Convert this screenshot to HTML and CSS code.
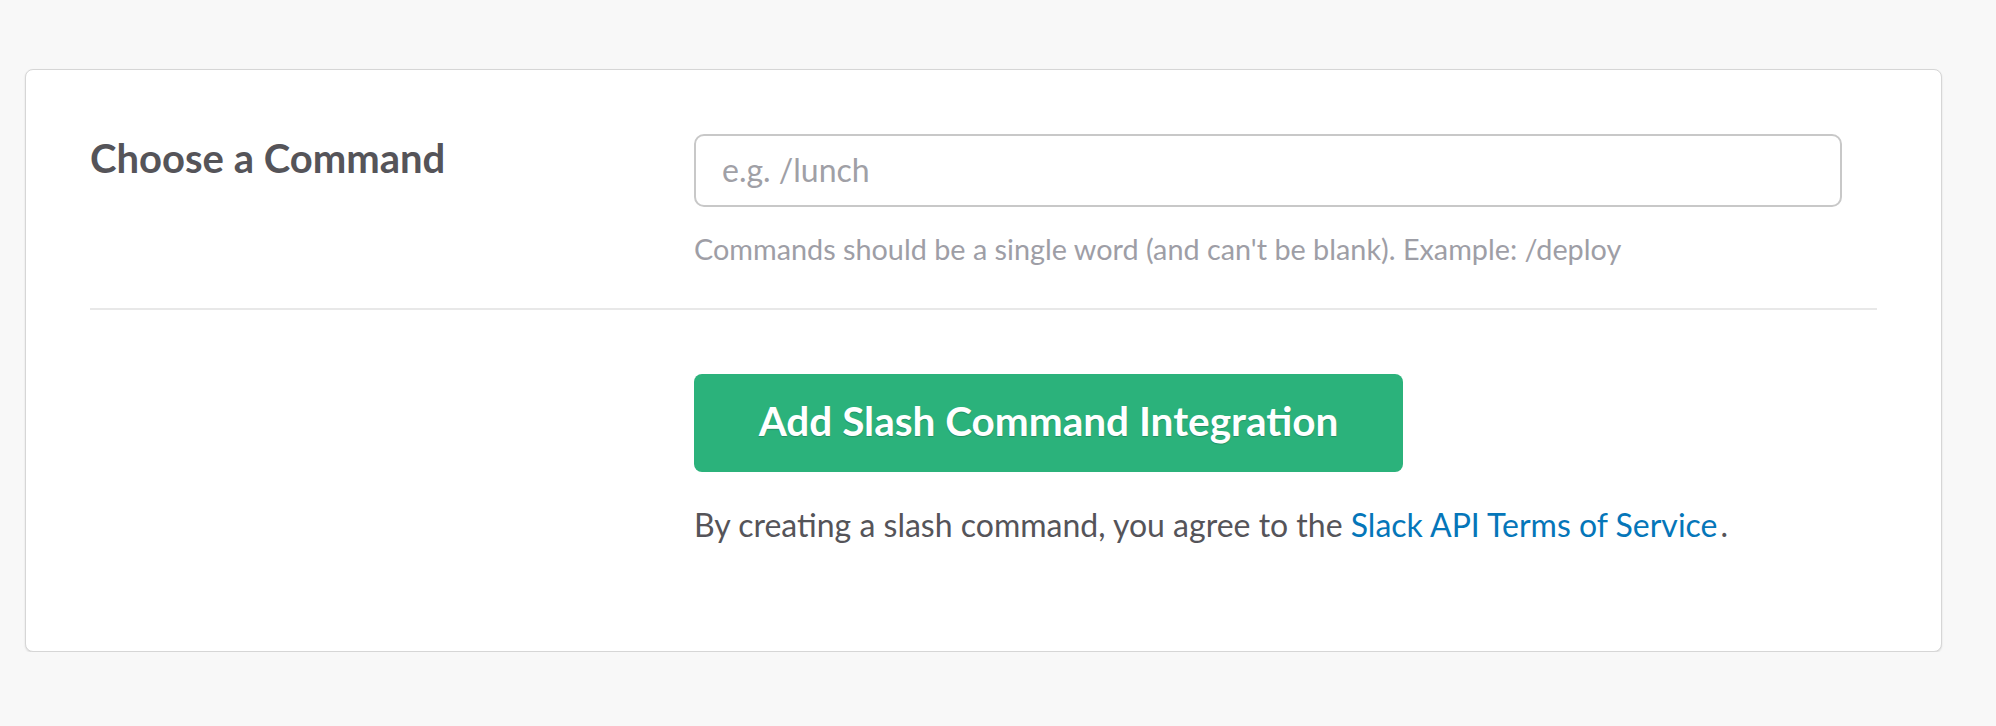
FILE: index.html
```html
<!DOCTYPE html>
<html lang="en">
<head>
<meta charset="utf-8">
<title>Add Slash Command</title>
<link rel="stylesheet" href="styles.css">
</head>
<body>
<div class="page">
  <section class="card">
    <div class="row row-command">
      <label class="label" for="command">Choose a Command</label>
      <div class="field">
        <input class="input" id="command" type="text" placeholder="e.g. /lunch">
        <p class="help">Commands should be a single word (and can't be blank). Example: /deploy</p>
      </div>
    </div>
    <hr class="divider">
    <div class="row row-submit">
      <div class="spacer"></div>
      <div class="field">
        <button class="btn" type="button">Add Slash Command Integration</button>
        <p class="terms">By creating a slash command, you agree to the <a class="link" href="#">Slack API Terms of Service</a>.</p>
      </div>
    </div>
  </section>
</div>
</body>
</html>
```

FILE: styles.css
```css
* { box-sizing: border-box; }

html, body {
  margin: 0;
  padding: 0;
  background: #f8f8f8;
  font-family: "Lato", "Open Sans", sans-serif;
  color: #555459;
}

.page {
  padding: 69px 54px 0 25px;
}

.card {
  width: 1917px;
  height: 583px;
  background: #fff;
  border: 1px solid #d6d6d6;
  border-radius: 8px;
  box-shadow: 0 1px 2px rgba(0, 0, 0, 0.12);
  padding: 64px 64px 0 64px;
}

.row {
  display: grid;
  grid-template-columns: 604px 1fr;
}

.label {
  font-size: 40px;
  font-weight: 700;
  line-height: 1.2;
  color: #555459;
}

.input {
  display: block;
  width: 1148px;
  height: 73px;
  border: 2px solid #c8c8c8;
  border-radius: 10px;
  padding: 0 26px 2px;
  font-family: inherit;
  font-size: 32px;
  color: #555459;
  background: #fff;
  outline: none;
}

.input::placeholder {
  color: #a0a0a6;
}

.help {
  margin: 25px 0 0;
  font-size: 28.8px;
  line-height: 1.2;
  color: #9e9ea6;
}

.row-command {
  padding-bottom: 41px;
}

.divider {
  margin: 0;
  border: 0;
  border-top: 2px solid #e8e8e8;
  height: 0;
}

.row-submit {
  padding-top: 64px;
}

.btn {
  display: block;
  width: 709px;
  height: 98px;
  border: 0;
  border-radius: 8px;
  background: #2bb27b;
  color: #fff;
  font-family: inherit;
  font-size: 40.5px;
  font-weight: 700;
  text-shadow: 0 1px 1px rgba(0, 0, 0, 0.2);
  padding: 0 0 4px;
  cursor: pointer;
}

.terms {
  margin: 34px 0 0;
  font-size: 32px;
  line-height: 1.2;
  color: #555459;
}

.link {
  color: #0576b9;
  text-decoration: none;
  margin-right: 3px;
}
```
